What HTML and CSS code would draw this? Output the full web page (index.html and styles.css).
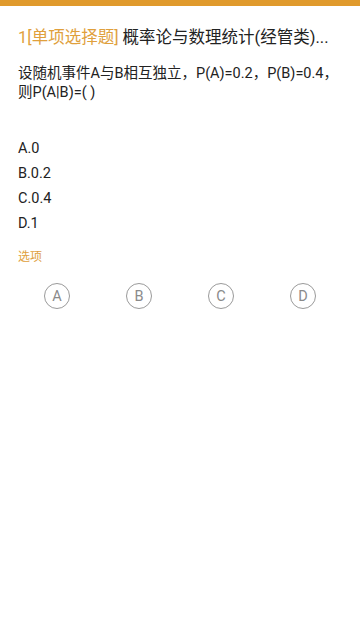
FILE: index.html
```html
<!DOCTYPE html>
<html lang="zh">
<head>
<meta charset="utf-8">
<link rel="stylesheet" href="styles.css">
</head>
<body>
<div class="topbar"></div>
<main class="content">
  <h1 class="title"><span class="qtype">1[单项选择题]</span> 概率论与数理统计(经管类)...</h1>
  <p class="question">设随机事件A与B相互独立，P(A)=0.2，P(B)=0.4，则P(A|B)=( )</p>
  <ul class="options">
    <li>A.0</li>
    <li>B.0.2</li>
    <li>C.0.4</li>
    <li>D.1</li>
  </ul>
  <div class="label">选项</div>
  <div class="choices">
    <div class="choice"><span class="circle">A</span></div>
    <div class="choice"><span class="circle">B</span></div>
    <div class="choice"><span class="circle">C</span></div>
    <div class="choice"><span class="circle">D</span></div>
  </div>
</main>
</body>
</html>
```
FILE: styles.css
```css
* { box-sizing: border-box; }
html, body { margin: 0; padding: 0; background: #fff; }
body {
  font-family: Roboto, "Noto Sans CJK SC", sans-serif;
  color: #222;
  width: 360px;
  height: 640px;
}
.topbar {
  height: 6px;
  background: #e09a2c;
}
.content {
  padding: 0 17px 0 18px;
}
.title {
  margin: 0;
  padding-top: 20px;
  font-size: 16.5px;
  font-weight: 400;
  line-height: 24px;
  color: #222;
  white-space: nowrap;
  overflow: hidden;
}
.qtype { color: #e0a03c; }
.question {
  margin: 14px 0 0;
  font-size: 14.5px;
  line-height: 19px;
  color: #222;
}
.options {
  list-style: none;
  margin: 34px 0 0;
  padding: 0;
  font-size: 14.5px;
  line-height: 25px;
  color: #222;
}
.label {
  margin-top: 13px;
  font-size: 12px;
  line-height: 16px;
  color: #e0a03c;
}
.choices {
  display: grid;
  grid-template-columns: repeat(4, 1fr);
  margin: 18px -1px 0 -2px;
}
.choice {
  display: flex;
  justify-content: center;
}
.circle {
  width: 26px;
  height: 26px;
  border: 1px solid #9a9a9a;
  border-radius: 50%;
  display: flex;
  align-items: center;
  justify-content: center;
  font-size: 14.5px;
  color: #8a8a8a;
}
```
